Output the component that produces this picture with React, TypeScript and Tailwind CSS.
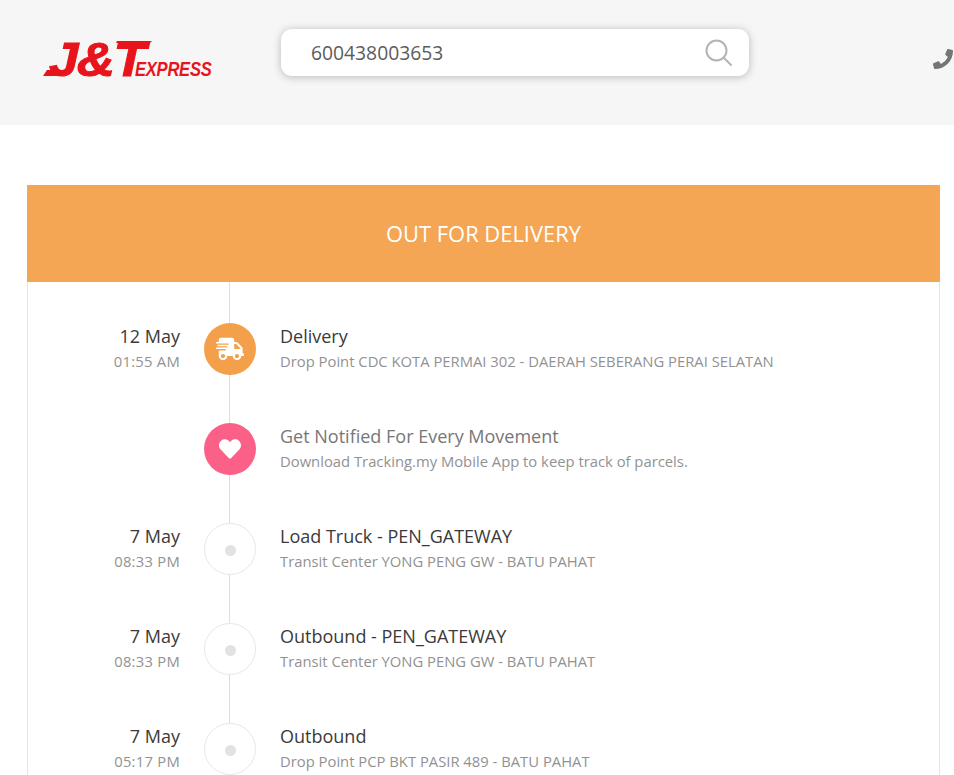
import { FaHeart, FaPhoneAlt, FaShippingFast } from "react-icons/fa";

const rows = [
    { day: "7 May", time: "08:33 PM", title: "Load Truck - PEN_GATEWAY", place: "Transit Center YONG PENG GW - BATU PAHAT" },
    { day: "7 May", time: "08:33 PM", title: "Outbound - PEN_GATEWAY", place: "Transit Center YONG PENG GW - BATU PAHAT" },
    { day: "7 May", time: "05:17 PM", title: "Outbound", place: "Drop Point PCP BKT PASIR 489 - BATU PAHAT" },
];

function Logo() {
    return (
        <div className="relative h-[36px] w-[169px] text-[#e8141c] italic font-bold font-['Liberation_Sans',sans-serif]">
            {/* foot of the J and speed lines of the T */}
            <svg className="absolute left-0 top-0" width="110" height="36" viewBox="0 0 110 36" fill="#e8141c">
                <path d="M4 29h18l-2 6H0z" />
                <path d="M74 0h35l-2 2H73zM82 3.500h19l-1.500 1.500H81zM81 6.500h16L95.500 8H80z" />
            </svg>
            <span className="absolute left-[6px] top-[-4px] origin-left scale-x-[1.08] text-[49px] leading-[44px] tracking-[-1.5px] [-webkit-text-stroke:1px_#e8141c]">
                J&amp;<span className="tracking-[-14px]">T</span>
            </span>
            <span className="absolute bottom-[-1px] left-[92px] origin-left scale-x-[0.85] text-[19.500px] leading-[18px] tracking-[-0.3px]">
                EXPRESS
            </span>
        </div>
    );
}

function TimelineRow({
    day,
    time,
    title,
    place,
    first,
    muted,
    circle,
}: {
    day?: string;
    time?: string;
    title: string;
    place: string;
    first?: boolean;
    muted?: boolean;
    circle: React.ReactNode;
}) {
    return (
        <div className="flex">
            <div className={`w-[152px] text-right ${first ? "pt-[41px]" : "pt-[24px]"}`}>
                <div className="mt-[1px] text-[18px] leading-[24px] text-[#3a3a3a]">{day}</div>
                <div className="mt-[1px] text-[14.800px] leading-[24px] tracking-[0.25px] text-[#929292]">{time}</div>
            </div>
            <div className="ml-[24px] flex w-[52px] flex-col items-center">
                <div className={`mr-px w-px bg-[#dedede] ${first ? "h-[41px]" : "h-[24px]"}`} />
                {circle}
                <div className="mr-px h-[24px] w-px bg-[#dedede]" />
            </div>
            <div className={`ml-[24px] ${first ? "pt-[41px]" : "pt-[24px]"}`}>
                <div className={`mt-[1px] text-[18px] leading-[24px] ${muted ? "text-[#777777]" : "text-[#3a3a3a]"}`}>{title}</div>
                <div className="mt-[1px] text-[14.800px] leading-[24px] text-[#929292]">{place}</div>
            </div>
        </div>
    );
}

export default function App() {
    return (
        <div className="h-screen overflow-hidden bg-white font-['Open_Sans',sans-serif]">
            <header className="flex h-[125px] bg-[#f6f6f7]">
                <div className="ml-[43px] mt-[41px]">
                    <Logo />
                </div>
                <div className="ml-[69px] mt-[29px] flex h-[47px] w-[468px] shrink-0 items-center justify-between rounded-[11px] bg-white pl-[30px] pr-[16px] shadow-[0_1px_8px_rgba(0,0,0,0.25)]">
                    <span className="pt-[1px] text-[19.300px] text-[#5c5c5c]">600438003653</span>
                    <svg width="28" height="28" viewBox="0 0 28 28" fill="none" stroke="#b4b4b4" strokeWidth="2" strokeLinecap="round">
                        <circle cx="11.500" cy="11.500" r="10" />
                        <path d="M18.500 18.500L26 26" />
                    </svg>
                </div>
                <FaPhoneAlt className="ml-[184px] mt-[49px] h-[20px] w-[20px] shrink-0 -scale-x-100 text-[#757575]" />
            </header>

            <main className="mx-[27px] mt-[60px] w-[913px] border-x border-[#e3e3e3]">
                <div className="-mx-px flex h-[97px] items-center justify-center bg-[#f4a654] pt-[1px] text-[21.900px] text-white">
                    OUT FOR DELIVERY
                </div>
                <TimelineRow
                    first
                    day="12 May"
                    time="01:55 AM"
                    title="Delivery"
                    place="Drop Point CDC KOTA PERMAI 302 - DAERAH SEBERANG PERAI SELATAN"
                    circle={
                        <div className="flex h-[52px] w-[52px] shrink-0 items-center justify-center rounded-full bg-[#f4a04a]">
                            <FaShippingFast className="h-[24px] w-[28px] text-white" />
                        </div>
                    }
                />
                <TimelineRow
                    muted
                    title="Get Notified For Every Movement"
                    place="Download Tracking.my Mobile App to keep track of parcels."
                    circle={
                        <div className="flex h-[52px] w-[52px] shrink-0 items-center justify-center rounded-full bg-[#fb6088]">
                            <FaHeart className="h-[22px] w-[22px] text-white" />
                        </div>
                    }
                />
                {rows.map((row, i) => (
                    <TimelineRow
                        key={i}
                        {...row}
                        circle={
                            <div className="flex h-[52px] w-[52px] shrink-0 items-center justify-center rounded-full border border-[#e8e8e8] bg-white">
                                <div className="mt-[2px] h-[11px] w-[11px] rounded-full bg-[#e2e2e2]" />
                            </div>
                        }
                    />
                ))}
            </main>
        </div>
    );
}
